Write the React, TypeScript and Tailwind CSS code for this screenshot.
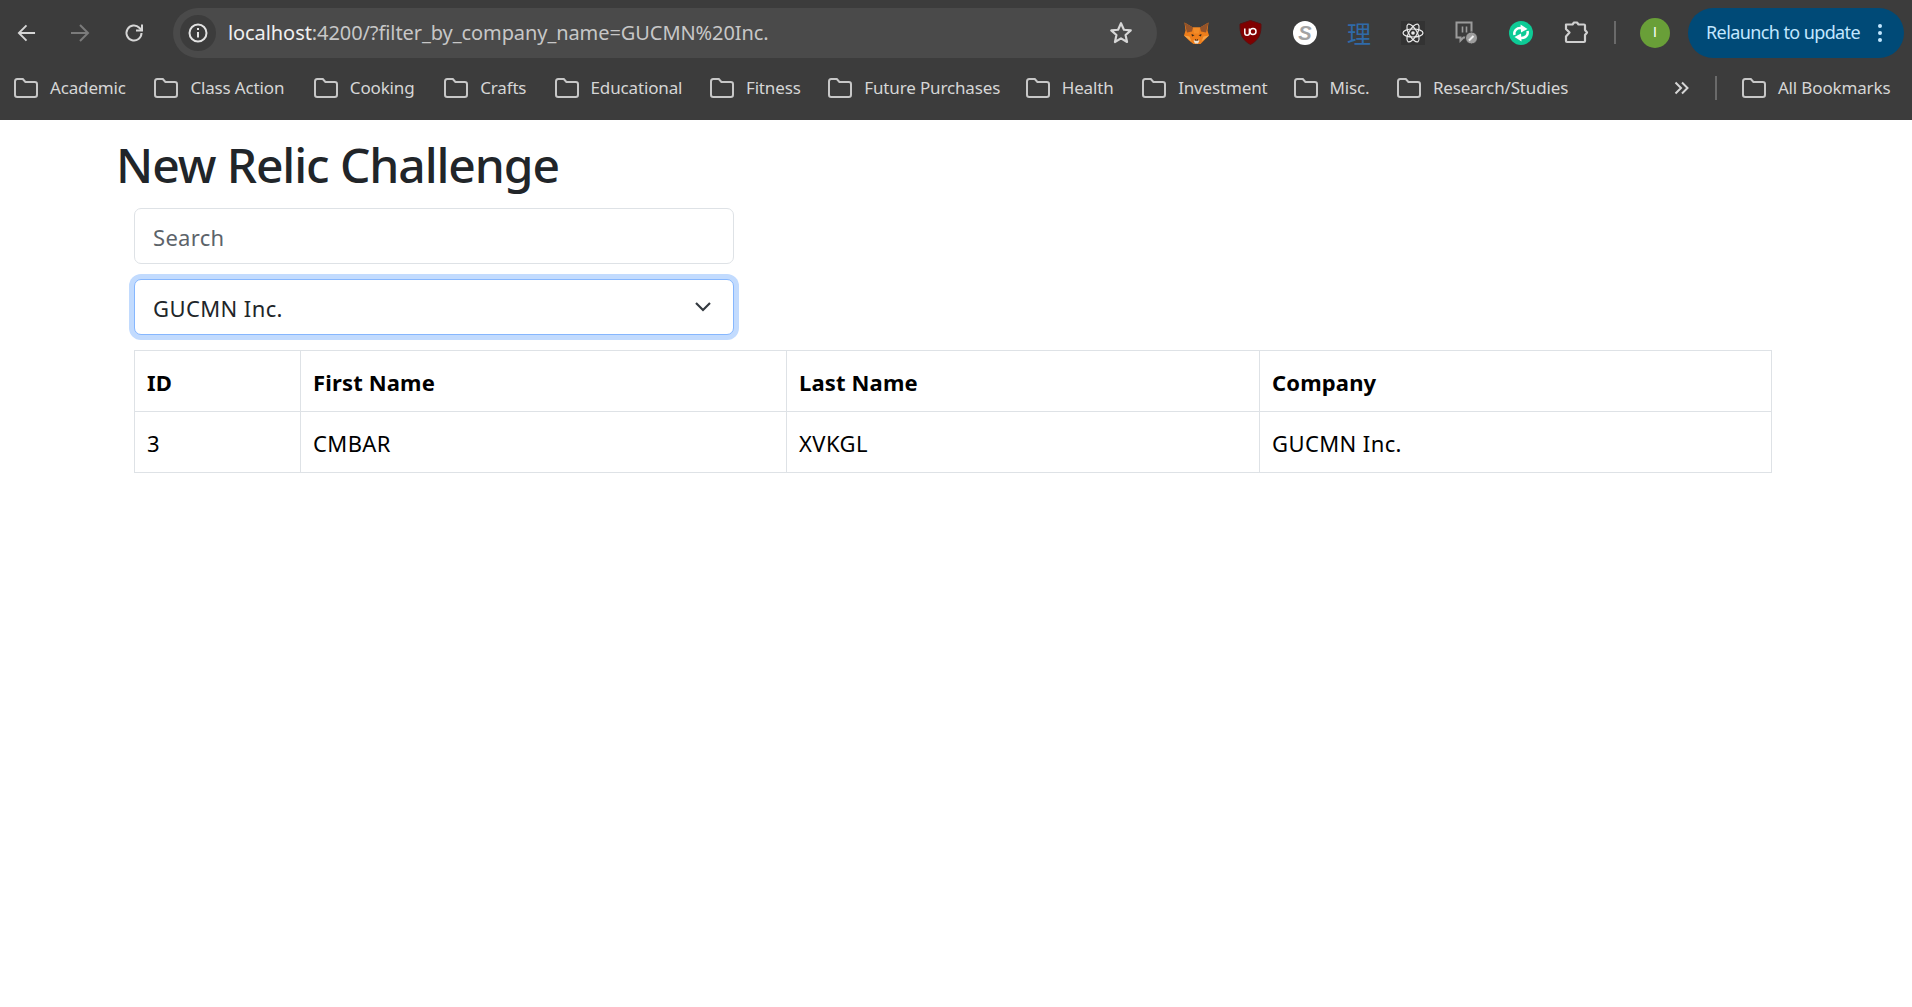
import React from "react";

const bookmarks = [
  { name: "Academic", w: "w-[77px]" },
  { name: "Class Action", w: "w-[96px]" },
  { name: "Cooking", w: "w-[67px]" },
  { name: "Crafts", w: "w-[47px]" },
  { name: "Educational", w: "w-[92px]" },
  { name: "Fitness", w: "w-[55px]" },
  { name: "Future Purchases", w: "w-[134px]" },
  { name: "Health", w: "w-[53px]" },
  { name: "Investment", w: "w-[88px]" },
  { name: "Misc.", w: "w-[40px]" },
  { name: "Research/Studies", w: "w-[134px]" },
];

function Folder() {
  return (
    <svg width="24" height="20" viewBox="0 0 24 20" fill="none" stroke="#c7c7c7" strokeWidth="2" className="shrink-0">
      <path d="M1 3.500C1 2.100 2 1 3.200 1h5.600l2.600 3h9.400c1.200 0 2.200 1 2.200 2.200v10.600c0 1.200-1 2.200-2.200 2.200H3.200C2 19 1 18 1 16.800z" />
    </svg>
  );
}

function Bookmark({ name, w }: { name: string; w: string }) {
  return (
    <div className="flex items-center gap-[12px] shrink-0">
      <Folder />
      <span className={`${w} whitespace-nowrap text-[17px] tracking-[-0.15px] text-[#d6d6d6]`}>{name}</span>
    </div>
  );
}

function Fox() {
  return (
    <svg width="25" height="24" viewBox="0 0 25 24">
      <path d="M0.500 1.500l8.500 5h7l8.500-5-1 8 1.500 5-5 5-3.500 3.500h-7L5 19.500l-5-5L1.500 9.500z" fill="#ee7e1b" />
      <path d="M0.500 1.500l8.500 5-1 4-5 1zM24.500 1.500l-8.500 5 1 4 5 1z" fill="#93532a" />
      <path d="M9 6.500h7l-1 6h-5z" fill="#f28c28" />
      <path d="M7.500 13l3 1.300-2.500 1.200zM17.500 13l-3 1.300 2.500 1.200z" fill="#33261a" />
      <path d="M9.500 19.500h6l-1.500 3h-3z" fill="#e9e2d6" />
      <path d="M11 18l1.500 1 1.500-1v1.500h-3z" fill="#2a2018" />
      <path d="M0 14.500l5.500 1 2 5zM25 14.500l-5.500 1-2 5z" fill="#f6a548" />
    </svg>
  );
}

function UBlock() {
  return (
    <svg width="23" height="25" viewBox="0 0 23 25">
      <path d="M11.500 0.500L22 4c.4 9.500-2 16-10.500 20.500C3 20 .6 13.500 1 4z" fill="#800000" stroke="#5a1010" />
      <path d="M5.800 8.500v4.500a2.300 2.300 0 0 0 4.600 0V8.500" fill="none" stroke="#fff" strokeWidth="1.500" />
      <circle cx="14" cy="11.500" r="3" fill="none" stroke="#fff" strokeWidth="1.500" />
    </svg>
  );
}

function SBadge() {
  return (
    <div className="flex h-[24px] w-[24px] items-center justify-center rounded-full bg-white">
      <span className="text-[20px] font-black italic leading-none text-[#a3a3a3] font-['Liberation_Sans',sans-serif]">S</span>
    </div>
  );
}

function ReactIcon() {
  return (
    <svg width="24" height="24" viewBox="0 0 24 24">
      <rect width="24" height="24" fill="#333333" />
      <g fill="none" stroke="#ececec" strokeWidth="1.200">
        <ellipse cx="12" cy="12" rx="10" ry="4" />
        <ellipse cx="12" cy="12" rx="10" ry="4" transform="rotate(60 12 12)" />
        <ellipse cx="12" cy="12" rx="10" ry="4" transform="rotate(120 12 12)" />
      </g>
      <circle cx="12" cy="12" r="1.800" fill="#ececec" />
    </svg>
  );
}

function TwitchIcon() {
  return (
    <svg width="23" height="24" viewBox="0 0 23 24">
      <path d="M1.500 1.500h15v15h-8l-3 3v-3h-4z" fill="none" stroke="#9b9b9b" strokeWidth="2" />
      <path d="M7.500 5.500v6M11.500 5.500v6" stroke="#9b9b9b" strokeWidth="1.600" />
      <circle cx="16.500" cy="17" r="6" fill="#9d9d9d" stroke="#3c3c3c" />
      <path d="M14 19.500l4.500-4.500" stroke="#eeeeee" strokeWidth="2" />
    </svg>
  );
}

function GreenSync() {
  return (
    <svg width="24" height="24" viewBox="0 0 24 24">
      <circle cx="12" cy="12" r="12" fill="#0ecb96" />
      <path d="M5.500 14c-1-4 2-7.500 7-7" fill="none" stroke="#fff" strokeWidth="2.500" />
      <path d="M11.500 3.500L18.500 8l-6.500 3.500z" fill="#fff" />
      <path d="M18.500 10c1 4-2 7.500-7 7" fill="none" stroke="#fff" strokeWidth="2.500" />
      <path d="M12.500 20.500L5.500 16l6.500-3.500z" fill="#fff" />
    </svg>
  );
}

function Puzzle() {
  return (
    <svg width="25" height="25" viewBox="0 0 25 25" fill="none" stroke="#cfcfcf" strokeWidth="2.200" strokeLinejoin="round">
      <path d="M2 4.500h6.500L10 2.500h3l1.500 2h5.500a1 1 0 0 1 1 1v4.500l2 2.500-2 2.500v6a1 1 0 0 1-1 1H3a1 1 0 0 1-1-1v-4.500l3.500-4L2 9z" />
    </svg>
  );
}

function NavArrow({ color, flip }: { color: string; flip?: boolean }) {
  return (
    <svg width="20" height="20" viewBox="0 0 20 20" fill="none" stroke={color} strokeWidth="2" className={flip ? "rotate-180" : ""}>
      <path d="M19 10H2M10 2l-8 8 8 8" />
    </svg>
  );
}

function Toolbar() {
  return (
    <header className="h-[120px] bg-[#3c3c3c] font-['Noto_Sans',sans-serif]">
      <div className="flex h-[64px] items-center pt-[1px]">
        <div className="ml-[17px] flex w-[19px] justify-center"><NavArrow color="#d6d6d6" /></div>
        <div className="ml-[34px] flex w-[20px] justify-center"><NavArrow color="#7b7b7b" flip /></div>
        <div className="ml-[33px]">
          <svg width="22" height="22" viewBox="0 0 22 22" fill="none" stroke="#d6d6d6" strokeWidth="2">
            <path d="M18.500 11a7.500 7.500 0 1 1-2.200-5.300L19 8.500" />
            <path d="M19 2.500v6h-6" />
          </svg>
        </div>
        <div className="ml-[28px] flex h-[50px] w-[984px] items-center rounded-full bg-[#4a4a4a] pl-[7px] pr-[23px]">
          <div className="flex h-[36px] w-[36px] items-center justify-center rounded-full bg-[#3c3c3c]">
            <svg width="20" height="20" viewBox="0 0 20 20" fill="none" stroke="#e3e3e3" strokeWidth="2">
              <circle cx="10" cy="10" r="8.500" />
              <path d="M10 9v5.500M10 5v2" />
            </svg>
          </div>
          <span className="ml-[12px] whitespace-nowrap text-[20px] tracking-[-0.08px] text-[#c7c7c7]">
            <span className="text-[#f0f0f0]">localhost</span>:4200/?filter_by_company_name=GUCMN%20Inc.
          </span>
          <svg className="ml-auto" width="26" height="26" viewBox="0 0 24 24" fill="none" stroke="#d6d6d6" strokeWidth="2" strokeLinejoin="round">
            <path d="M12 3l2.700 6 6.300.6-4.800 4.300 1.400 6.400L12 17l-5.600 3.300 1.400-6.400L3 9.600 9.300 9z" />
          </svg>
        </div>
        <div className="ml-[27px] flex w-[25px] justify-center"><Fox /></div>
        <div className="ml-[30px] flex w-[23px] justify-center"><UBlock /></div>
        <div className="ml-[31px]"><SBadge /></div>
        <span className="ml-[30px] w-[24px] text-[24px] leading-none text-[#2f6aa8] font-['Noto_Sans_CJK_SC',sans-serif]">理</span>
        <div className="ml-[30px]"><ReactIcon /></div>
        <div className="ml-[30px]"><TwitchIcon /></div>
        <div className="ml-[31px]"><GreenSync /></div>
        <div className="ml-[31px] w-[24px]"><Puzzle /></div>
        <div className="ml-[26px] h-[23px] w-[2px] bg-[#6a6a6a]" />
        <div className="ml-[24px] flex h-[30px] w-[30px] items-center justify-center rounded-full bg-[#699f38] text-[14px] font-light text-white font-['Liberation_Sans',sans-serif]">I</div>
        <div className="ml-[18px] flex h-[50px] w-[216px] items-center rounded-full bg-[#004a77] pl-[18px]">
          <span className="whitespace-nowrap text-[18px] tracking-[-0.6px] text-[#c2e7ff]">Relaunch to update</span>
          <span className="ml-[18px] flex flex-col gap-[3px]">
            <span className="h-[4px] w-[4px] rounded-full bg-[#c2e7ff]" />
            <span className="h-[4px] w-[4px] rounded-full bg-[#c2e7ff]" />
            <span className="h-[4px] w-[4px] rounded-full bg-[#c2e7ff]" />
          </span>
        </div>
      </div>
      <div className="flex h-[48px] items-center pl-[14px]">
        <div className="flex gap-[27.4px]">
          {bookmarks.map((b) => <Bookmark key={b.name} {...b} />)}
        </div>
        <svg className="ml-[107px]" width="15" height="14" viewBox="0 0 15 14" fill="none" stroke="#d6d6d6" strokeWidth="2">
          <path d="M1.500 1.500L7 7l-5.500 5.500M8 1.500L13.500 7 8 12.500" />
        </svg>
        <div className="ml-[26px] h-[24px] w-[2px] bg-[#6a6a6a]" />
        <div className="ml-[25px]"><Bookmark name="All Bookmarks" w="w-[113px]" /></div>
      </div>
    </header>
  );
}

function Cell({ children, head, w }: { children: React.ReactNode; head?: boolean; w?: string }) {
  const cls = `${w ?? ""} border border-[#dee2e6] px-[12px] pt-[16px] pb-[14px] text-left text-[22px] leading-[30px] text-[#000000]`;
  return head ? <th className={`${cls} font-bold tracking-[0.15px]`}>{children}</th> : <td className={`${cls} font-normal tracking-[0.4px]`}>{children}</td>;
}

export default function App() {
  return (
    <div className="min-h-[1007px] bg-white font-['Noto_Sans',sans-serif] text-[#212529]">
      <Toolbar />
      <main className="pl-[117px]">
        <h1 className="-ml-[1px] pt-[15px] text-[48px] font-medium leading-[60px] tracking-[-1.1px] text-[#212529]">New Relic Challenge</h1>
        <div className="ml-[17px] w-[600px]">
          <input
            placeholder="Search"
            className="mt-[13px] block h-[56px] w-full rounded-[7px] border border-[#dee2e6] bg-white px-[18px] pt-[2px] text-[22px] tracking-[0.3px] text-[#212529] placeholder:text-[#5c636a] outline-none"
          />
          <div className="relative mt-[15px]">
            <select className="block h-[56px] w-full appearance-none rounded-[7px] border border-[#86b7fe] bg-white px-[18px] pt-[2px] text-[22px] tracking-[0.4px] text-[#212529] outline-none shadow-[0_0_0_5px_#c2dbfe]">
              <option>GUCMN Inc.</option>
            </select>
            <svg className="pointer-events-none absolute right-[22px] top-[21px]" width="18" height="14" viewBox="0 0 18 14" fill="none" stroke="#343a40" strokeWidth="2.200">
              <path d="M2 3l7 7 7-7" />
            </svg>
          </div>
        </div>
        <table className="ml-[17px] mt-[15px] w-[1638px] table-fixed border-collapse">
          <thead>
            <tr>
              <Cell head w="w-[166px]">ID</Cell>
              <Cell head w="w-[486px]">First Name</Cell>
              <Cell head w="w-[473px]">Last Name</Cell>
              <Cell head>Company</Cell>
            </tr>
          </thead>
          <tbody>
            <tr>
              <Cell>3</Cell>
              <Cell>CMBAR</Cell>
              <Cell>XVKGL</Cell>
              <Cell>GUCMN Inc.</Cell>
            </tr>
          </tbody>
        </table>
      </main>
    </div>
  );
}
